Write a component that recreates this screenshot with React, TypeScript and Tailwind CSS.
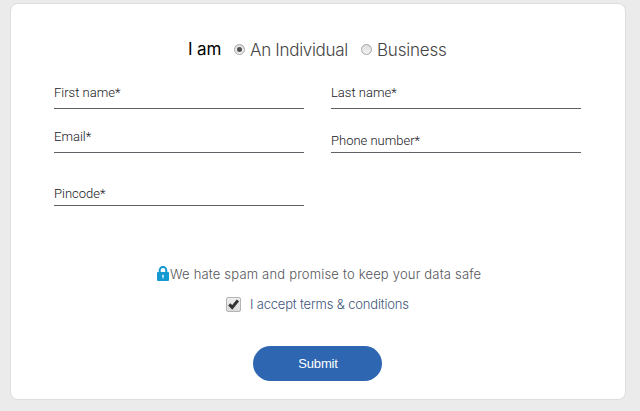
import { useState } from 'react';
import clsx from 'clsx';

type FieldProps = {
  name: string;
  label: string;
  type?: string;
  className?: string;
};

function Field({ name, label, type = 'text', className }: FieldProps) {
  const [value, setValue] = useState('');

  return (
    <label className={clsx('grid items-end border-b border-[#626067]', className)}>
      <span
        className={clsx(
          'col-start-1 row-start-1 text-[13px] leading-4 whitespace-nowrap text-[#16161c]',
          value && 'invisible'
        )}
      >
        {label}
      </span>
      <input
        name={name}
        type={type}
        value={value}
        onChange={(e) => setValue(e.target.value)}
        className="col-start-1 row-start-1 w-full bg-transparent text-[13px] leading-4 outline-none"
      />
    </label>
  );
}

type RadioProps = {
  label: string;
  checked: boolean;
  onChange: () => void;
  className?: string;
};

function Radio({ label, checked, onChange, className }: RadioProps) {
  return (
    <label className={clsx('flex items-center', className)}>
      <input type="radio" name="customer" checked={checked} onChange={onChange} className="sr-only" />
      <span className="mr-[5px] flex size-[11px] items-center justify-center rounded-full border border-[#a5a5a5] bg-linear-to-b from-[#dedede] to-[#f2f2f2]">
        {checked && <span className="size-[5px] rounded-full bg-[#505050]" />}
      </span>
      <span className="pt-[3px]">{label}</span>
    </label>
  );
}

function LockIcon() {
  return (
    <svg width="12" height="15" viewBox="0 0 12 15" className="mr-[1px] mb-[2px] shrink-0">
      <path d="M2.7 7V4.2a3.3 3.3 0 0 1 6.6 0V7" fill="none" stroke="#1499d1" strokeWidth="2" />
      <rect x="0" y="6" width="12" height="9" rx="1" fill="#1499d1" />
      <path d="M6 8.8a1.1 1.1 0 0 1 .6 2v1.7H5.4v-1.7a1.1 1.1 0 0 1 .6-2z" fill="#d5effa" />
    </svg>
  );
}

export default function App() {
  const [customer, setCustomer] = useState('individual');
  const [accepted, setAccepted] = useState(true);

  return (
    <div className="h-[411px] w-[640px] bg-[#ebebeb] pt-[3px] pl-[10px] font-['Roboto',sans-serif] font-light">
      <form
        className="flex h-[397px] w-[616px] flex-col rounded-lg border border-[#dedede] bg-white"
        onSubmit={(e) => e.preventDefault()}
      >
        <div className="mt-[33px] ml-[177px] flex h-6 items-center font-['Inter',sans-serif] text-[17px] whitespace-nowrap text-[#444444]">
          <span className="w-[46px] pt-px font-normal tracking-[-0.15px] text-black">I am</span>
          <Radio
            label="An Individual"
            checked={customer === 'individual'}
            onChange={() => setCustomer('individual')}
            className="w-[127px] tracking-[-0.3px]"
          />
          <Radio
            label="Business"
            checked={customer === 'business'}
            onChange={() => setCustomer('business')}
            className="tracking-[-0.2px]"
          />
        </div>

        <div className="mt-[23px] ml-[43px] grid w-[527px] grid-cols-[250px_250px] gap-x-[27px]">
          <Field name="firstName" label="First name*" className="h-[25px] pb-[7px]" />
          <Field name="lastName" label="Last name*" className="h-[25px] pb-[7px]" />
          <Field name="email" label="Email*" type="email" className="mt-[19px] h-[25px] pb-[7px]" />
          <Field name="phone" label="Phone number*" type="tel" className="mt-[19px] h-[25px] pb-[3px]" />
          <Field name="pincode" label="Pincode*" className="mt-[28px] h-[25px] pb-[3px]" />
        </div>

        <p className="mt-[58px] ml-[146px] flex h-5 items-center font-['Inter',sans-serif] text-[13px] tracking-[0.19px] whitespace-nowrap text-[#55555a]">
          <LockIcon />
          <span className="pt-px">We hate spam and promise to keep your data safe</span>
        </p>

        <label className="mt-[10px] ml-[215px] flex h-5 items-center font-['Inter',sans-serif] text-[13px] tracking-[-0.18px] whitespace-nowrap text-[#42567c]">
          <input
            type="checkbox"
            checked={accepted}
            onChange={(e) => setAccepted(e.target.checked)}
            className="sr-only"
          />
          <span className="mr-[9px] flex size-[15px] items-center justify-center rounded-[2px] border border-[#b4b4b4] bg-linear-to-b from-[#eeeeee] to-[#dcdcdc]">
            {accepted && (
              <svg width="11" height="11" viewBox="0 0 11 11">
                <path d="M1.3 5.4 4.2 8.4 9.9 1.4" fill="none" stroke="#333333" strokeWidth="3" />
              </svg>
            )}
          </span>
          <span className="pt-[2px]">I accept terms &amp; conditions</span>
        </label>

        <button
          type="submit"
          className="mt-[32px] ml-[242px] h-[35px] w-[129px] rounded-full bg-[#2e66b1] pl-px font-['Liberation_Sans',sans-serif] text-[13px] font-normal tracking-[-0.2px] text-white"
        >
          Submit
        </button>
      </form>
    </div>
  );
}
